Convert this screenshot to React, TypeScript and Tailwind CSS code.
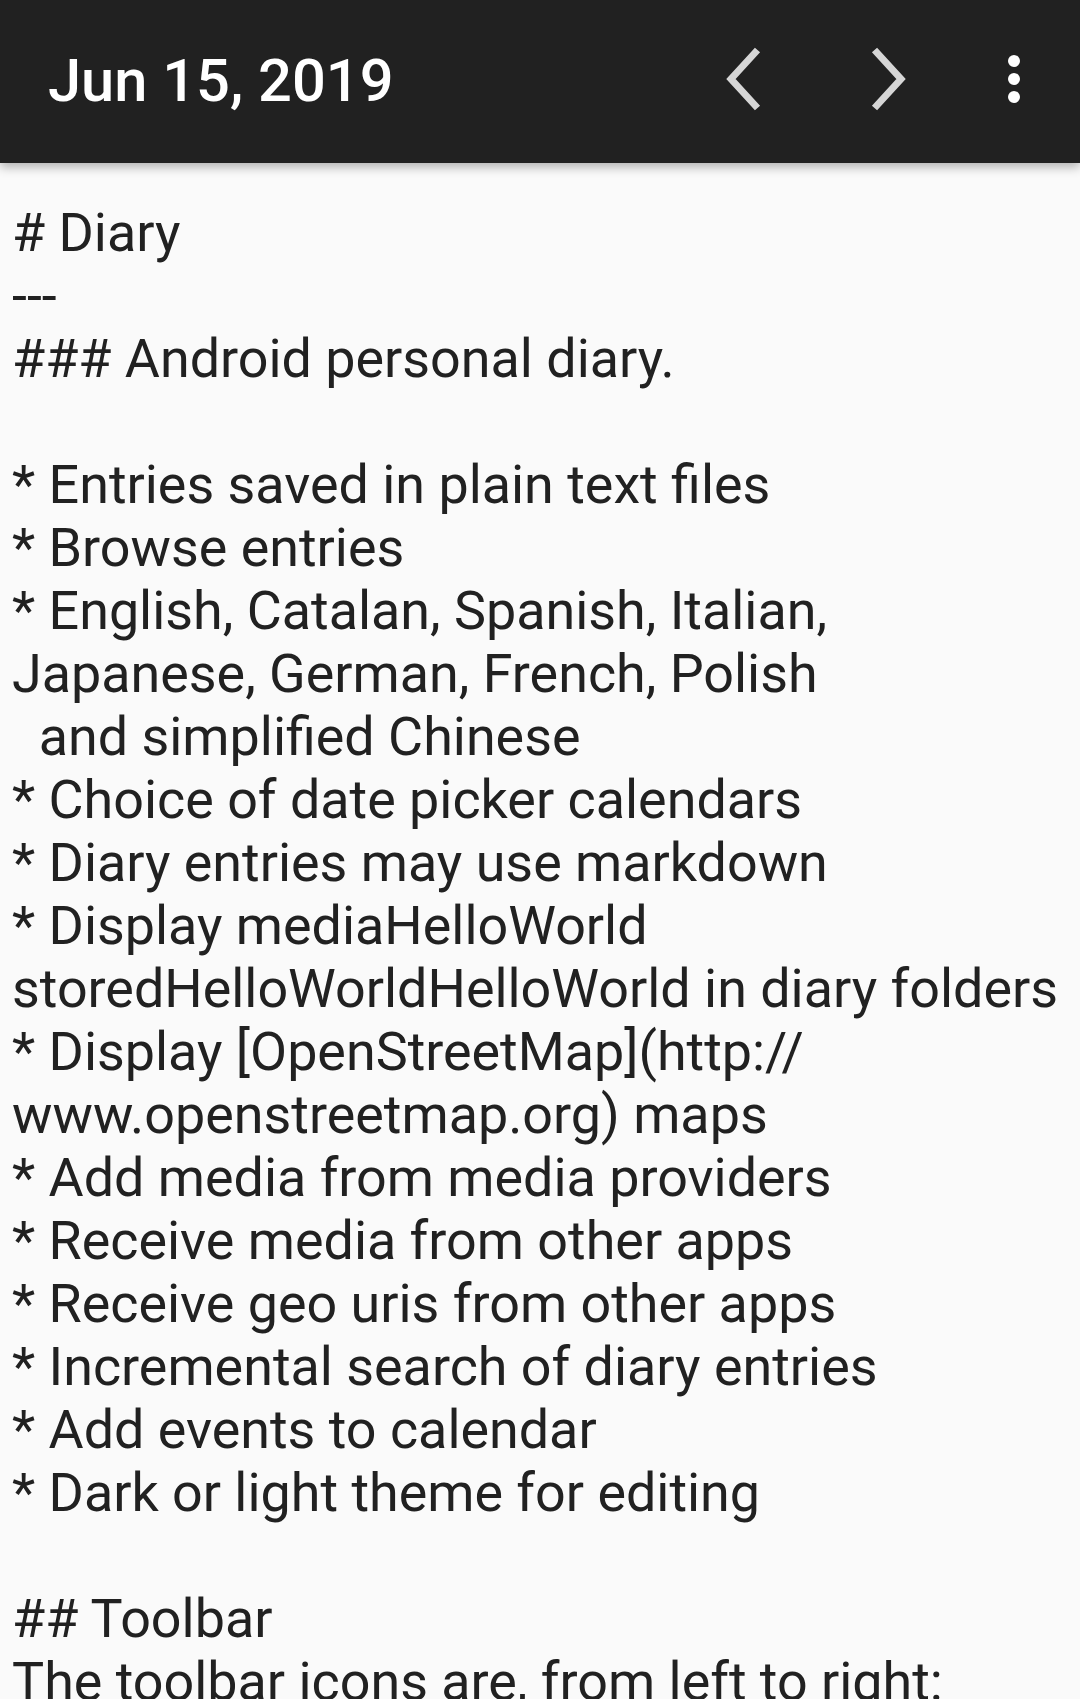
import React from "react";

const lines: string[] = [
  "# Diary",
  "---",
  "### Android personal diary.",
  "",
  "* Entries saved in plain text files",
  "* Browse entries",
  "* English, Catalan, Spanish, Italian,",
  "Japanese, German, French, Polish",
  "  and simplified Chinese",
  "* Choice of date picker calendars",
  "* Diary entries may use markdown",
  "* Display mediaHelloWorld",
  "storedHelloWorldHelloWorld in diary folders",
  "* Display [OpenStreetMap](http://",
  "www.openstreetmap.org) maps",
  "* Add media from media providers",
  "* Receive media from other apps",
  "* Receive geo uris from other apps",
  "* Incremental search of diary entries",
  "* Add events to calendar",
  "* Dark or light theme for editing",
  "",
  "## Toolbar",
  "The toolbar icons are, from left to right:",
];

function Chevron({ dir }: { dir: "left" | "right" }) {
  const pts = dir === "left" ? "31.5,4 5,33 31.5,62" : "4.5,4 31,33 4.5,62";
  return (
    <svg width="36" height="66" viewBox="0 0 36 66" fill="none">
      <polyline
        points={pts}
        stroke="#d6d6d6"
        strokeWidth="7"
        strokeLinejoin="miter"
        strokeLinecap="butt"
      />
    </svg>
  );
}

export default function App() {
  return (
    <div
      className="w-[1080px] h-[1699px] overflow-hidden bg-[#fafafa] flex flex-col"
      style={{ fontFamily: "Roboto, 'Noto Sans', sans-serif" }}
    >
      <header className="relative z-10 h-[163px] shrink-0 bg-[#212121] flex items-center shadow-[0_4px_10px_rgba(0,0,0,0.3)]">
        <div className="pl-[48px] text-white text-[59.6px] font-medium leading-none">
          Jun 15, 2019
        </div>
        <div className="ml-auto flex items-center h-full pr-[12px] pb-[5px]">
          <div className="w-[144px] h-full flex items-center justify-center">
            <Chevron dir="left" />
          </div>
          <div className="w-[144px] h-full flex items-center justify-center">
            <Chevron dir="right" />
          </div>
          <div className="w-[108px] h-full flex flex-col items-center justify-center gap-[6px]">
            <span className="block w-[12px] h-[12px] rounded-full bg-white" />
            <span className="block w-[12px] h-[12px] rounded-full bg-white" />
            <span className="block w-[12px] h-[12px] rounded-full bg-white" />
          </div>
        </div>
      </header>
      <main className="pt-[38px] pl-[12px] text-[#212121] text-[53.85px] leading-[63px]">
        {lines.map((l, i) => (
          <div key={i} className="whitespace-pre h-[63px]">
            {l === "" ? "\u00a0" : l}
          </div>
        ))}
      </main>
    </div>
  );
}
